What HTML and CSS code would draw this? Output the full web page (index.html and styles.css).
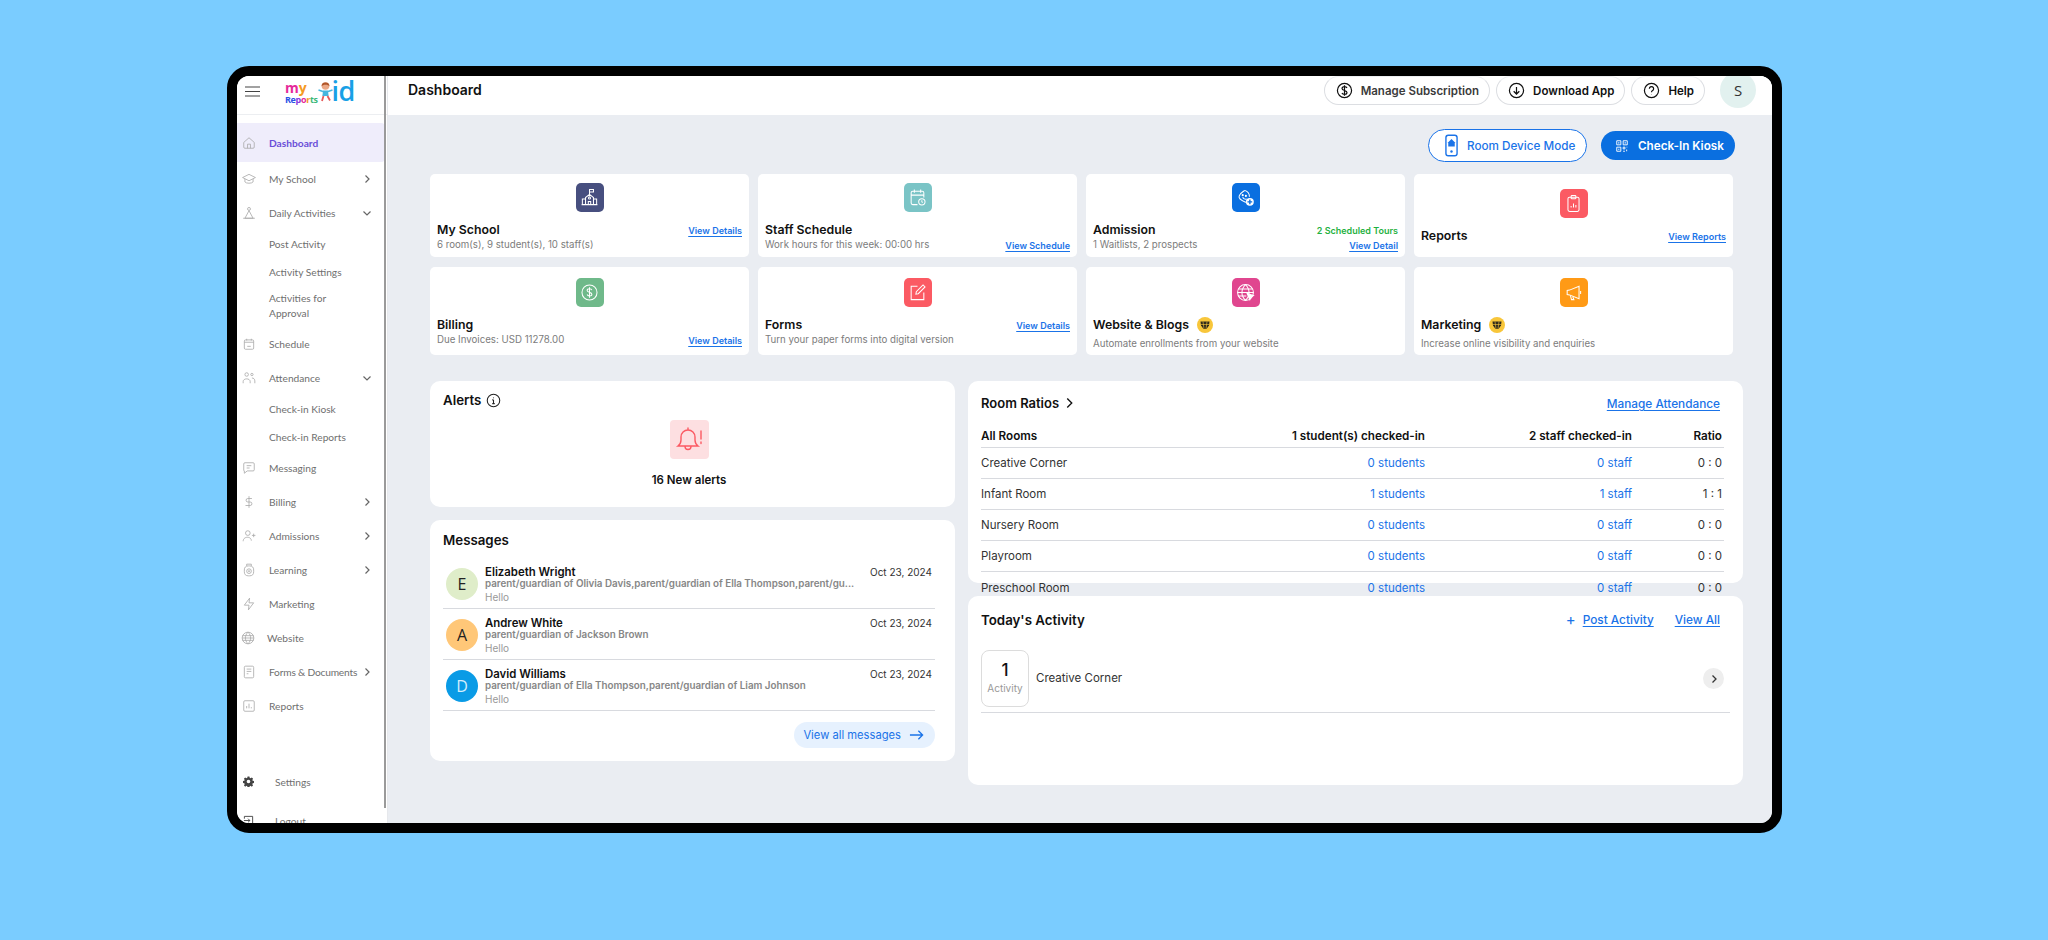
FILE: index.html
```html
<!DOCTYPE html>
<html lang="en">
<head>
<meta charset="utf-8">
<title>Dashboard</title>
<link rel="stylesheet" href="styles.css">
</head>
<body>
<div class="frame">
  <aside class="sidebar">
    <div class="side-top">
      <svg class="menu-icon" viewBox="0 0 16 11"><path d="M0 1h15M0 5.500h15M0 10h15"/></svg>
      <div class="logo">
        <div class="logo-words">
          <div class="logo-my"><span class="c-pink">m</span><span class="c-orange">y</span></div>
          <div class="logo-reports"><span class="c-blue">Re</span><span class="c-purple">p</span><span class="c-pink">o</span><span class="c-orange">r</span><span class="c-green">ts</span></div>
        </div>
        <svg class="logo-kid" viewBox="0 0 15 21"><circle cx="7.500" cy="5" r="3.800" fill="#eaa886"/><path d="M3.500 5.500a4 4 0 0 1 8 0c-1-2.200-6.800-2.200-8 0z" fill="#b0562a"/><path d="M5 9.500h5l.6 5.500H4.400z" fill="#46b6de"/><path d="M5 10.500 .5 9M10 10.500 14.500 9" stroke="#46b6de" stroke-width="1.400"/><path d="M5.500 15 4 20M9.500 15l2.500 4.500" stroke="#e65a5a" stroke-width="1.800"/></svg>
        <span class="logo-id">id</span>
      </div>
    </div>
    <nav class="nav">
      <a class="nav-item active"><svg class="ni" viewBox="0 0 24 24"><path d="M3 11 12 3l9 8v8a2 2 0 0 1-2 2H5a2 2 0 0 1-2-2z"/><path d="M9.500 21v-7h5v7"/></svg><span>Dashboard</span></a>
      <a class="nav-item"><svg class="ni" viewBox="0 0 24 24"><path d="M12 4 1 9.500 12 15l11-5.500z"/><path d="M5 12v5c2 3 12 3 14 0v-5"/></svg><span>My School</span><svg class="chev" viewBox="0 0 10 10"><path d="m3.500 1.500 3.500 3.500-3.500 3.500"/></svg></a>
      <a class="nav-item"><svg class="ni" viewBox="0 0 24 24"><circle cx="12" cy="5" r="2.500"/><path d="M12 8 5 21h14zM2 21h20"/></svg><span>Daily Activities</span><svg class="chev" viewBox="0 0 10 10"><path d="m1.500 3.500 3.500 3.500 3.500-3.500"/></svg></a>
      <a class="nav-sub">Post Activity</a>
      <a class="nav-sub">Activity Settings</a>
      <a class="nav-sub nav-sub-wrap">Activities for<br>Approval</a>
      <a class="nav-item"><svg class="ni" viewBox="0 0 24 24"><rect x="4" y="5" width="16" height="16" rx="2"/><path d="M8 3v3M16 3v3M4 9h16M9 16h6"/></svg><span>Schedule</span></a>
      <a class="nav-item"><svg class="ni" viewBox="0 0 24 24"><circle cx="8" cy="6" r="3"/><circle cx="17" cy="6" r="2"/><path d="M2 21v-3c0-6 12-6 12 0v3M17 12c3 0 5 2 5 5v4"/></svg><span>Attendance</span><svg class="chev" viewBox="0 0 10 10"><path d="m1.500 3.500 3.500 3.500 3.500-3.500"/></svg></a>
      <a class="nav-sub">Check-in Kiosk</a>
      <a class="nav-sub">Check-in Reports</a>
      <a class="nav-item"><svg class="ni" viewBox="0 0 24 24"><path d="M3 5a2 2 0 0 1 2-2h14a2 2 0 0 1 2 2v10a2 2 0 0 1-2 2H9l-5 4v-4a1 1 0 0 1-1-1z"/><path d="M8 8h8M8 12h5"/></svg><span>Messaging</span></a>
      <a class="nav-item"><svg class="ni" viewBox="0 0 24 24"><path d="M12 2v20M17 6H10a3 3 0 0 0 0 6h4a3 3 0 0 1 0 6H6"/></svg><span>Billing</span><svg class="chev" viewBox="0 0 10 10"><path d="m3.500 1.500 3.500 3.500-3.500 3.500"/></svg></a>
      <a class="nav-item"><svg class="ni" viewBox="0 0 24 24"><circle cx="10" cy="7" r="4"/><path d="M2 21c0-9 14-9 14-1M20 8v6M17 11h6"/></svg><span>Admissions</span><svg class="chev" viewBox="0 0 10 10"><path d="m3.500 1.500 3.500 3.500-3.500 3.500"/></svg></a>
      <a class="nav-item"><svg class="ni" viewBox="0 0 24 24"><rect x="4" y="5" width="16" height="17" rx="7"/><circle cx="12" cy="14" r="4"/><circle cx="12" cy="14" r="1"/><path d="M8 5V2h8v3"/></svg><span>Learning</span><svg class="chev" viewBox="0 0 10 10"><path d="m3.500 1.500 3.500 3.500-3.500 3.500"/></svg></a>
      <a class="nav-item"><svg class="ni" viewBox="0 0 24 24"><path d="M13 2 4 14h8l-1 8 9-12h-8z"/></svg><span>Marketing</span></a>
      <a class="nav-item nav-item-web"><svg class="ni" viewBox="0 0 24 24"><circle cx="12" cy="12" r="10"/><path d="M2 12h20M2.500 8h19M2.500 16h19M12 2c-6 6-6 14 0 20M12 2c6 6 6 14 0 20"/></svg><span>Website</span></a>
      <a class="nav-item"><svg class="ni" viewBox="0 0 24 24"><rect x="4" y="2" width="16" height="20" rx="2"/><path d="M8 7h8M8 11h8M8 15h3"/></svg><span class="tight">Forms &amp; Documents</span><svg class="chev" viewBox="0 0 10 10"><path d="m3.500 1.500 3.500 3.500-3.500 3.500"/></svg></a>
      <a class="nav-item"><svg class="ni" viewBox="0 0 24 24"><rect x="3" y="3" width="18" height="18" rx="2"/><path d="M8 16v-4M12 16V8M16 16v-2"/></svg><span>Reports</span></a>
    </nav>
    <div class="side-bottom">
      <a class="foot-item"><svg class="fi" viewBox="0 0 24 24"><path fill="#444" fill-rule="evenodd" d="M10 1h4l.6 3 2 .9 2.600-1.700 2.800 2.800-1.700 2.600.9 2 3 .6v4l-3 .6-.9 2 1.700 2.600-2.800 2.800-2.600-1.700-2 .9-.6 3h-4l-.6-3-2-.9-2.600 1.700-2.800-2.800 1.700-2.600-.9-2-3-.6v-4l3-.6.9-2-1.700-2.600 2.800-2.800 2.600 1.700 2-.9zM12 8a4 4 0 1 0 0 8 4 4 0 0 0 0-8z"/></svg><span>Settings</span></a>
      <a class="foot-item"><svg class="fi fi-line" viewBox="0 0 24 24"><path d="M3 8V3h18v18H3v-5M2 12h13M11 8l4 4-4 4"/></svg><span>Logout</span></a>
    </div>
    <div class="scrollbar"></div>
  </aside>

  <main class="main">
    <header class="topbar">
      <h1 class="page-title">Dashboard</h1>
      <div class="top-actions">
        <a class="pill"><svg class="pill-ic" viewBox="0 0 24 24"><circle cx="12" cy="12" r="10"/><path d="M15.500 8.500C15 7 13.500 6.500 12 6.500c-2 0-3.500 1-3.500 2.700 0 3.600 7 1.900 7 5.600 0 1.700-1.500 2.700-3.500 2.700-1.600 0-3-.6-3.600-2M12 4.500v15"/></svg><span class="pill-muted">Manage Subscription</span></a>
        <a class="pill"><svg class="pill-ic" viewBox="0 0 24 24"><circle cx="12" cy="12" r="10"/><path d="M12 7v10M8 13l4 4 4-4"/></svg><span>Download App</span></a>
        <a class="pill"><svg class="pill-ic" viewBox="0 0 24 24"><circle cx="12" cy="12" r="10"/><path d="M9 9.500a3 3 0 1 1 4.500 2.600c-1 .6-1.500 1.200-1.500 2.400M12 17.500v.5"/></svg><span>Help</span></a>
        <div class="avatar-top">S</div>
      </div>
    </header>

    <div class="content">
      <div class="mode-row">
        <a class="btn-outline"><svg class="btn-ic" viewBox="0 0 14 24"><rect x="1" y="1" width="12" height="22" rx="2.500" fill="#fff" stroke="#1a73e8" stroke-width="1.500"/><path d="M7 5 3.500 8.500V13h7V8.500z" fill="#1a73e8"/><circle cx="7" cy="18.500" r="1.300" fill="#1a73e8"/></svg>Room Device Mode</a>
        <a class="btn-solid"><svg class="btn-ic" viewBox="0 0 24 24"><path fill="none" stroke="#fff" stroke-width="1.600" d="M3 3h7v7H3zM14 3h7v7h-7zM3 14h7v7H3zM14 14h3v3h-3zM20 14h1M14 21h3M20 18v3"/><path fill="#fff" d="M5.500 5.500h2v2h-2zM16.500 5.500h2v2h-2zM5.500 16.500h2v2h-2z"/></svg>Check-In Kiosk</a>
      </div>

      <section class="tiles">
        <article class="tile">
          <div class="tile-ic ic-navy"><svg viewBox="0 0 24 24"><path d="M12 8V2h5v3h-5M7 21v-9l5-4 5 4v9M3 21v-7h4M21 21v-7h-4M2 21h20M10.500 21v-4h3v4"/><circle cx="12" cy="12.500" r="1.300"/></svg></div>
          <div class="tile-line"><h3>My School</h3><a class="link">View Details</a></div>
          <div class="tile-line"><p>6 room(s), 9 student(s), 10 staff(s)</p></div>
        </article>
        <article class="tile">
          <div class="tile-ic ic-teal"><svg viewBox="0 0 24 24"><path d="M12 21H6a2 2 0 0 1-2-2V6a2 2 0 0 1 2-2h12a2 2 0 0 1 2 2v6M4 9h16M8 2v4M16 2v4"/><circle cx="17.500" cy="17.500" r="4"/><path d="M17.500 15.500v2l1 1"/></svg></div>
          <div class="tile-line"><h3>Staff Schedule</h3></div>
          <div class="tile-line"><p>Work hours for this week: 00:00 hrs</p><a class="link">View Schedule</a></div>
        </article>
        <article class="tile">
          <div class="tile-ic ic-blue"><svg viewBox="0 0 24 24"><path d="M11 3c-2 2-6 3-7 7-1 3 3 6 8 8 2 0 3-2 4-3"/><path d="M11 3c3 1 6 4 6 8"/><path d="M8.500 11.500c.5 2 3 3 5 2.500"/><circle cx="8.500" cy="9" r=".7"/><circle cx="12.500" cy="10" r=".7"/><circle cx="17.500" cy="17.500" r="5" fill="#fff" stroke="none"/><path d="M17.500 14.500v6M14.500 17.500h6" stroke="#0a6fe0" stroke-width="1.800"/></svg></div>
          <div class="tile-line"><h3>Admission</h3><span class="tours">2 Scheduled Tours</span></div>
          <div class="tile-line"><p>1 Waitlists, 2 prospects</p><a class="link">View Detail</a></div>
        </article>
        <article class="tile tile-solo">
          <div class="tile-ic ic-red"><svg viewBox="0 0 24 24"><rect x="5" y="4" width="14" height="18" rx="2"/><rect x="9" y="2" width="6" height="4" rx="1"/><path d="M9 17v-2M12 17v-5M15 17v-3"/></svg></div>
          <div class="tile-line"><h3>Reports</h3><a class="link">View Reports</a></div>
        </article>
        <article class="tile tile-low">
          <div class="tile-ic ic-green"><svg viewBox="0 0 24 24"><circle cx="12" cy="12" r="9.500"/><path d="M15 9c-.4-1.300-1.600-1.800-3-1.800-1.700 0-3 .8-3 2.200 0 3 6 1.600 6 4.700 0 1.400-1.300 2.200-3 2.200-1.400 0-2.600-.5-3-1.800M12 5.500v13"/></svg></div>
          <div class="tile-line"><h3>Billing</h3></div>
          <div class="tile-line"><p>Due Invoices: USD 11278.00</p><a class="link">View Details</a></div>
        </article>
        <article class="tile tile-low">
          <div class="tile-ic ic-red"><svg viewBox="0 0 24 24"><path d="M12 4H4v17h16v-9"/><path d="m10 14 .5-3L19 2.500l2.500 2.500L13 13.500z"/></svg></div>
          <div class="tile-line"><h3>Forms</h3><a class="link">View Details</a></div>
          <div class="tile-line"><p>Turn your paper forms into digital version</p></div>
        </article>
        <article class="tile tile-low tile-spaced">
          <div class="tile-ic ic-pink"><svg viewBox="0 0 24 24"><circle cx="12" cy="12" r="10"/><path d="M2 12h20M3 7.500h18M3 16.500h10M12 2c-6 6-6 14 0 20M12 2c6 6 6 14 0 20"/><path d="m14 13 8 3-3 1.500-1.500 3.500z" fill="#fff"/></svg></div>
          <div class="tile-line tile-head"><h3>Website &amp; Blogs</h3><svg class="crown" viewBox="0 0 16 16"><circle cx="8" cy="8" r="8" fill="#f8c63a"/><path d="M3.500 4.500h9l-.5 4-2.500 3.500h-3L4 8.500z" fill="#2f2a1c"/><path d="M6 4.500 7 12M10 4.500 9 12M3.800 7.500h8.400" stroke="#f8c63a" stroke-width=".6"/></svg></div>
          <div class="tile-line"><p>Automate enrollments from your website</p></div>
        </article>
        <article class="tile tile-low tile-spaced">
          <div class="tile-ic ic-orange"><svg viewBox="0 0 24 24"><path d="M4 9.500v5l3 .5 12 5V4L7 9z"/><path d="M8 15.500 9.500 21h3l-1.500-4M21 10v4"/></svg></div>
          <div class="tile-line tile-head"><h3>Marketing</h3><svg class="crown" viewBox="0 0 16 16"><circle cx="8" cy="8" r="8" fill="#f8c63a"/><path d="M3.500 4.500h9l-.5 4-2.500 3.500h-3L4 8.500z" fill="#2f2a1c"/><path d="M6 4.500 7 12M10 4.500 9 12M3.800 7.500h8.400" stroke="#f8c63a" stroke-width=".6"/></svg></div>
          <div class="tile-line"><p>Increase online visibility and enquiries</p></div>
        </article>
      </section>

      <section class="panels">
        <div class="col-left">
          <div class="card card-alerts">
            <h2 class="card-title">Alerts <svg class="info" viewBox="0 0 24 24"><circle cx="12" cy="12" r="10"/><path d="M12 11v6M12 7v1.500M10 11h2M10 17h4"/></svg></h2>
            <div class="bell-box"><svg viewBox="0 0 30 30"><path d="M4 21c2-1.500 3-3 3-6v-3a7 7 0 0 1 14 0v3c0 3 1 4.500 3 6zM14 5V3M11 21.500a3 3 0 0 0 6 0M27 6v8M27 17v1.500"/></svg></div>
            <div class="alert-count">16 New alerts</div>
          </div>
          <div class="card card-messages">
            <h2 class="card-title">Messages</h2>
            <div class="msg">
              <div class="msg-av av-e">E</div>
              <div class="msg-body"><div class="msg-name">Elizabeth Wright</div><div class="msg-who">parent/guardian of Olivia Davis,parent/guardian of Ella Thompson,parent/gu...</div><div class="msg-text">Hello</div></div>
              <div class="msg-date">Oct 23, 2024</div>
            </div>
            <div class="msg">
              <div class="msg-av av-a">A</div>
              <div class="msg-body"><div class="msg-name">Andrew White</div><div class="msg-who">parent/guardian of Jackson Brown</div><div class="msg-text">Hello</div></div>
              <div class="msg-date">Oct 23, 2024</div>
            </div>
            <div class="msg">
              <div class="msg-av av-d">D</div>
              <div class="msg-body"><div class="msg-name">David Williams</div><div class="msg-who">parent/guardian of Ella Thompson,parent/guardian of Liam Johnson</div><div class="msg-text">Hello</div></div>
              <div class="msg-date">Oct 23, 2024</div>
            </div>
            <div class="msg-foot"><a class="view-all">View all messages<svg viewBox="0 0 16 12"><path d="M1 6h13.500M10 1.500 14.500 6 10 10.500"/></svg></a></div>
          </div>
        </div>

        <div class="col-right">
          <div class="card card-ratios">
            <div class="ratios-head">
              <h2 class="card-title">Room Ratios <svg class="title-chev" viewBox="0 0 10 12"><path d="m2.500 1 5 5-5 5"/></svg></h2>
              <a class="link link-lg link-low">Manage Attendance</a>
            </div>
            <div class="rr rr-head"><span>All Rooms</span><span>1 student(s) checked-in</span><span>2 staff checked-in</span><span>Ratio</span></div>
            <div class="rr"><span>Creative Corner</span><span class="blue">0 students</span><span class="blue">0 staff</span><span>0 : 0</span></div>
            <div class="rr"><span>Infant Room</span><span class="blue">1 students</span><span class="blue">1 staff</span><span>1 : 1</span></div>
            <div class="rr"><span>Nursery Room</span><span class="blue">0 students</span><span class="blue">0 staff</span><span>0 : 0</span></div>
            <div class="rr"><span>Playroom</span><span class="blue">0 students</span><span class="blue">0 staff</span><span>0 : 0</span></div>
            <div class="rr rr-last"><span>Preschool Room</span><span class="blue">0 students</span><span class="blue">0 staff</span><span>0 : 0</span></div>
          </div>
          <div class="card card-activity">
            <div class="activity-head">
              <h2 class="card-title">Today's Activity</h2>
              <div class="activity-links"><span class="plus">+</span><a class="link link-lg">Post Activity</a><a class="link link-lg link-all">View All</a></div>
            </div>
            <div class="activity-item">
              <div class="activity-box"><strong>1</strong><span>Activity</span></div>
              <div class="activity-name">Creative Corner</div>
              <div class="round-next"><svg viewBox="0 0 10 10"><path d="m3.500 1.500 3.500 3.500-3.500 3.500"/></svg></div>
            </div>
          </div>
        </div>
      </section>
    </div>
  </main>
</div>
</body>
</html>
```
FILE: styles.css
```css
* { box-sizing: border-box; }
html, body { margin: 0; height: 100%; }
body { background: #7accff; overflow: hidden; font-family: Inter, "Liberation Sans", sans-serif; color: #111; }
a { color: inherit; text-decoration: none; }
h1, h2, h3, p { margin: 0; }

.frame { display: flex; width: 1555px; height: 767px; margin: 66px 0 0 227px; background: #fff; border: 10px solid #000; border-radius: 22px; overflow: hidden; }

/* sidebar */
.sidebar { position: relative; flex: 0 0 151px; height: 100%; border-right: 1px solid #e6e8ec; background: #fff; font-family: Lato, "Open Sans", sans-serif; font-size: 10.200px; color: #6f6f6f; }
.side-top { display: flex; align-items: center; height: 39px; padding-left: 8px; border-bottom: 1px solid #eceef1; }
.menu-icon { width: 16px; height: 11px; margin-top: -8px; fill: none; stroke: #444; stroke-width: 1.200; }
.logo { display: flex; align-items: center; margin-left: 24px; height: 36px; margin-top: -3px; }
.logo-words { font-family: "Open Sans", sans-serif; font-weight: 700; }
.logo-my { font-size: 14px; line-height: 12px; }
.logo-reports { font-size: 9px; line-height: 12px; letter-spacing: -.35px; }
.c-pink { color: #e6299a; } .c-orange { color: #f59a23; } .c-blue { color: #2a52e6; } .c-purple { color: #8a3ae0; } .c-green { color: #3cb878; }
.logo-kid { flex: none; width: 15px; height: 21px; margin: 0 -1px 4px 0; }
.logo-id { font-family: "Open Sans", sans-serif; font-size: 27px; line-height: 28px; font-weight: 600; color: #18a0e6; letter-spacing: -.5px; margin-top: -5px; }

.nav { margin-top: 8px; }
.nav-item { display: flex; align-items: center; height: 34px; padding-left: 5px; padding-right: 15px; white-space: nowrap; }
.nav-item.active { height: 39px; margin-right: 2px; background: #efedfb; border-radius: 0 4px 4px 0; color: #6a4ed8; font-weight: 700; }
.ni { flex: none; width: 14px; height: 14px; margin-right: 13px; fill: none; stroke: #a9a9a9; stroke-width: 1.400; }
.nav-item-web { padding-left: 4px; }
.nav-item-web .ni { margin-right: 12px; }
.tight { letter-spacing: -.2px; }
.chev { flex: none; width: 10px; height: 10px; margin-left: auto; fill: none; stroke: #666; stroke-width: 1.200; }
.nav-sub { display: block; height: 28px; padding-left: 32px; line-height: 28px; }
.nav-sub-wrap { height: 41px; padding-top: 5px; line-height: 15px; }
.side-bottom { margin-top: 39px; }
.foot-item { display: flex; align-items: center; height: 39px; padding-left: 6px; }
.fi { flex: none; width: 11px; height: 11px; margin-right: 21px; }
.fi-line { fill: none; stroke: #444; stroke-width: 2; }
.scrollbar { position: absolute; top: 0; left: 147px; width: 2px; height: 732px; background: #9a9a9a; }

/* main */
.main { flex: 1; min-width: 0; background: #eaedf2; }
.topbar { display: flex; justify-content: space-between; height: 39px; padding: 0 16px 0 20px; background: #fff; }
.page-title { font-size: 14px; font-weight: 600; line-height: 28px; }
.top-actions { display: flex; align-items: flex-start; }
.pill { display: flex; align-items: center; gap: 8px; height: 29px; padding: 0 10px 0 11px; margin-right: 6px; border: 1px solid #dcdee2; border-top-color: #eceef1; border-radius: 15px; font-size: 11.500px; font-weight: 600; color: #111; background: #fff; }
.pill-muted { color: #3b3b3b; }
.pill-ic { width: 17px; height: 17px; fill: none; stroke: #111; stroke-width: 1.700; }
.avatar-top { width: 36px; height: 36px; margin: -4px 0 0 9px; border-radius: 50%; background: #e2f1ef; font: 15px/36px "Open Sans", sans-serif; color: #333; text-align: center; }

.content { padding: 14px 0 0 42px; }
.mode-row { display: flex; justify-content: flex-end; align-items: center; height: 33px; gap: 14px; padding-right: 37px; }
.btn-outline, .btn-solid { display: flex; align-items: center; border-radius: 17px; font-size: 11.700px; font-weight: 500; }
.btn-outline { height: 33px; width: 159px; padding-left: 16px; gap: 9px; background: #fff; border: 1px solid #1a73e8; color: #1a73e8; }
.btn-solid { height: 29px; width: 134px; padding-left: 14px; gap: 9px; background: #0a6fe0; color: #fff; font-weight: 600; }
.btn-ic { width: 14px; height: 16px; }
.btn-outline .btn-ic { width: 13px; height: 23px; }

.tiles { display: grid; grid-template-columns: repeat(4, 319px); grid-template-rows: 83px 88px; gap: 10px 9px; margin-top: 12px; }
.tile { display: flex; flex-direction: column; padding: 9px 7px 0; background: #fff; border-radius: 5px; }
.tile-low { padding-top: 11px; }
.tile-solo { padding-top: 15px; }
.tile-ic { flex: none; align-self: center; display: flex; align-items: center; justify-content: center; width: 28px; height: 29px; margin-bottom: 10px; border-radius: 5px; }
.tile-ic svg { width: 19px; height: 19px; fill: none; stroke: #fff; stroke-width: 1.300; }
.ic-navy { background: #474f7f; } .ic-teal { background: #7ac4c6; } .ic-blue { background: #0a6fe0; } .ic-red { background: #fb5a63; }
.ic-green { background: #6fb98a; } .ic-pink { background: #e0468f; } .ic-orange { background: #ff9a16; }
.tile-line { display: flex; justify-content: space-between; align-items: center; height: 16px; }
.tile-line h3 { font-size: 12.300px; line-height: 16px; font-weight: 600; color: #111; }
.tile-line p { font-size: 9.700px; line-height: 14px; color: #7c7c7c; }
.tile-line + .tile-line { margin-top: -1px; }
.tile-head { justify-content: flex-start; gap: 8px; }
.tile-spaced .tile-line + .tile-line { margin-top: 3px; }
.link { color: #1a73e8; font-size: 9px; font-weight: 600; text-decoration: underline; text-underline-offset: 2px; white-space: nowrap; }
.link-lg { font-size: 11.800px; font-weight: 500; }
.link-low { margin-top: 2px; }
.tours { font-size: 9px; font-weight: 600; color: #1fb141; }
.crown { width: 16px; height: 16px; flex: none; }

.panels { display: flex; gap: 13px; margin-top: 26px; }
.card { background: #fff; border-radius: 10px; }
.col-left { flex: 0 0 525px; display: flex; flex-direction: column; gap: 13px; }
.col-right { flex: 0 0 775px; display: flex; flex-direction: column; gap: 13px; }
.card-title { display: flex; align-items: center; gap: 5px; font-size: 13.300px; line-height: 20px; font-weight: 600; color: #111; }
.info { width: 15px; height: 15px; fill: none; stroke: #222; stroke-width: 1.700; }
.card-alerts { height: 126px; padding: 9px 20px 0 13px; }
.bell-box { display: flex; align-items: center; justify-content: center; width: 39px; height: 39px; margin: 10px auto 0; border-radius: 4px; background: #fddfe1; }
.bell-box svg { width: 30px; height: 30px; fill: none; stroke: #fb5a63; stroke-width: 1.400; stroke-linecap: round; }
.alert-count { margin-top: 13px; font-size: 11.500px; line-height: 16px; font-weight: 600; text-align: center; }
.card-messages { height: 241px; padding: 10px 20px 0 13px; }
.card-messages .card-title { margin-bottom: 8px; }
.msg { display: flex; align-items: flex-start; height: 51px; padding: 8px 3px 0; border-bottom: 1px solid #d8dadf; }
.msg-av { flex: none; width: 32px; height: 32px; margin: 2px 7px 0 0; border-radius: 50%; font: 16px/32px "Open Sans", sans-serif; text-align: center; color: #222; }
.av-e { background: #dfedc9; } .av-a { background: #ffc778; } .av-d { background: #0a9be6; color: #d5eefc; }
.msg-body { flex: 1; min-width: 0; }
.msg-name { font-size: 11.400px; line-height: 12px; font-weight: 600; color: #111; }
.msg-who { font-size: 9.800px; line-height: 11px; font-weight: 600; color: #868686; }
.msg-text { margin-top: 2px; font-size: 10px; line-height: 13px; color: #999; }
.msg-date { flex: none; font-size: 10px; line-height: 12px; color: #333; }
.msg-foot { display: flex; justify-content: flex-end; margin-top: 11px; }
.view-all { display: flex; align-items: center; gap: 8px; height: 26px; padding: 0 11px 0 9px; border-radius: 13px; background: #e6f1fe; color: #1a73e8; font-size: 11.200px; }
.view-all svg { width: 15px; height: 12px; fill: none; stroke: #1a73e8; stroke-width: 1.400; }

.card-ratios { height: 202px; padding: 12px 19px 0 13px; }
.ratios-head { display: flex; justify-content: space-between; align-items: center; height: 20px; margin-bottom: 12px; padding-right: 4px; }
.ratios-head .card-title { font-size: 13px; padding-left: 0; }
.title-chev { width: 9px; height: 12px; margin-left: 1px; fill: none; stroke: #111; stroke-width: 1.500; }
.rr { display: grid; grid-template-columns: 200px 244px 207px 90px; align-items: center; height: 31px; border-bottom: 1px solid #d8dadf; font-size: 11.500px; color: #333; }
.rr span + span { text-align: right; }
.rr-head { height: 23px; font-weight: 600; color: #111; font-size: 11.700px; }
.rr-last { border-bottom: 0; height: 31px; }
.blue { color: #1a73e8; }
.card-activity { height: 189px; padding: 14px 13px 0; }
.activity-head { display: flex; justify-content: space-between; align-items: center; height: 20px; padding-right: 10px; }
.activity-links { display: flex; align-items: center; }
.plus { margin-right: 7px; color: #1a73e8; font-size: 15px; line-height: 16px; }
.link-all { margin-left: 21px; }
.activity-item { display: flex; align-items: flex-start; height: 63px; margin-top: 20px; padding-right: 6px; border-bottom: 1px solid #d8dadf; }
.activity-box { display: flex; flex-direction: column; align-items: center; flex: none; width: 48px; height: 57px; padding-top: 8px; border: 1px solid #dcdcdc; border-radius: 8px; }
.activity-box strong { font-size: 17px; line-height: 22px; font-weight: 500; }
.activity-box span { font-size: 10px; line-height: 14px; color: #999; }
.activity-name { flex: 1; margin-left: 7px; font-size: 11.500px; line-height: 57px; color: #333; }
.round-next { display: flex; align-items: center; justify-content: center; width: 21px; height: 21px; margin-top: 18px; border-radius: 50%; background: #eeeeee; }
.round-next svg { width: 10px; height: 10px; fill: none; stroke: #333; stroke-width: 1.300; }
```
